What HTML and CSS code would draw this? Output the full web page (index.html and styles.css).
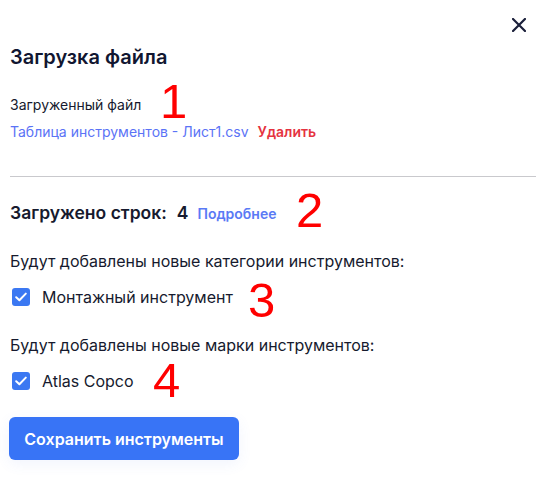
FILE: index.html
```html
<!DOCTYPE html>
<html lang="ru">
<head>
<meta charset="utf-8">
<link rel="stylesheet" href="styles.css">
</head>
<body>
<div class="modal">
  <div class="topbar">
    <button class="close" aria-label="Закрыть">
      <svg width="14" height="14" viewBox="0 0 14 14"><path d="M1 1L13 13M13 1L1 13" stroke="#1a1f3a" stroke-width="2.2" stroke-linecap="square"/></svg>
    </button>
  </div>
  <h1 class="title">Загрузка файла</h1>
  <div class="label">Загруженный файл</div>
  <div class="file-row">
    <a class="file-link">Таблица инструментов - Лист1.csv</a>
    <a class="delete">Удалить</a>
  </div>
  <hr class="divider">
  <div class="count-row">
    <span class="count-label">Загружено строк:</span>
    <span class="count-num">4</span>
    <a class="more">Подробнее</a>
  </div>
  <div class="section">
    <div class="section-title">Будут добавлены новые категории инструментов:</div>
    <label class="check-row">
      <span class="box"><svg width="12" height="10" viewBox="0 0 12 10"><path d="M1.2 5.2L4.4 8.2L10.8 1.6" fill="none" stroke="#fff" stroke-width="2" stroke-linecap="round" stroke-linejoin="round"/></svg></span>
      <span class="check-text">Монтажный инструмент</span>
    </label>
  </div>
  <div class="section second">
    <div class="section-title">Будут добавлены новые марки инструментов:</div>
    <label class="check-row">
      <span class="box"><svg width="12" height="10" viewBox="0 0 12 10"><path d="M1.2 5.2L4.4 8.2L10.8 1.6" fill="none" stroke="#fff" stroke-width="2" stroke-linecap="round" stroke-linejoin="round"/></svg></span>
      <span class="check-text">Atlas Copco</span>
    </label>
  </div>
  <button class="save">Сохранить инструменты</button>
  <span class="note n1">1</span>
  <span class="note n2">2</span>
  <span class="note n3">3</span>
  <span class="note n4">4</span>
</div>
</body>
</html>
```
FILE: styles.css
```css
* { box-sizing: border-box; }
html, body { margin: 0; padding: 0; background: #fff; }
body {
  font-family: Inter, "Noto Sans", sans-serif;
  color: #161a2e;
  width: 544px;
  height: 493px;
  overflow: hidden;
}
.modal {
  position: relative;
  padding: 0 8px 0 10px;
  display: flex;
  flex-direction: column;
  align-items: stretch;
  height: 493px;
}
.topbar {
  display: flex;
  justify-content: flex-end;
  height: 45px;
  padding-top: 18px;
  padding-right: 10px;
}
.close {
  border: 0;
  background: none;
  padding: 0;
  width: 14px;
  height: 14px;
  display: block;
  line-height: 0;
}
.title {
  margin: 0;
  font-size: 20px;
  font-weight: 600;
  line-height: 24px;
  color: #111631;
}
.label {
  margin-top: 27px;
  font-size: 14px;
  line-height: 17px;
}
.file-row {
  margin-top: 10px;
  display: flex;
  gap: 9px;
  font-size: 14px;
  line-height: 17px;
}
.file-link { color: #5b73f6; }
.delete { color: #e5333f; font-weight: 600; }
.divider {
  margin: 36px 0 0 0;
  border: 0;
  border-top: 1px solid #c9c9cd;
  height: 0;
}
.count-row {
  margin-top: 25px;
  display: flex;
  align-items: baseline;
  line-height: 22px;
}
.count-label { font-size: 17.5px; font-weight: 600; }
.count-num { font-size: 17.5px; font-weight: 600; margin-left: 10px; }
.more { margin-left: 9px; font-size: 14px; font-weight: 600; color: #5a7af5; }
.section { margin-top: 26px; display: flex; flex-direction: column; }
.section.second { margin-top: 28px; }
.section-title { font-size: 16px; line-height: 20px; }
.check-row {
  margin-top: 16px;
  display: flex;
  align-items: center;
  gap: 12px;
  padding-left: 2px;
}
.box {
  width: 18px;
  height: 18px;
  border-radius: 3px;
  background: #3b78f2;
  display: flex;
  align-items: center;
  justify-content: center;
}
.check-text { font-size: 16px; line-height: 20px; }
.save {
  margin-top: 26px;
  align-self: flex-start;
  width: 230px;
  height: 43px;
  margin-left: -1px;
  border: 0;
  border-radius: 6px;
  background: #3874f6;
  color: #fff;
  font-family: Inter, "Noto Sans", sans-serif;
  font-size: 16px;
  font-weight: 600;
  box-shadow: 0 4px 14px rgba(80, 110, 230, 0.08);
}
.note {
  position: absolute;
  color: #ff0000;
  font-family: "Liberation Sans", Arial, sans-serif;
  font-size: 49px;
  line-height: 49px;
}
.n1 { left: 160px; top: 77px; }
.n2 { left: 296px; top: 186px; }
.n3 { left: 248px; top: 276px; }
.n4 { left: 153px; top: 356px; }
```
